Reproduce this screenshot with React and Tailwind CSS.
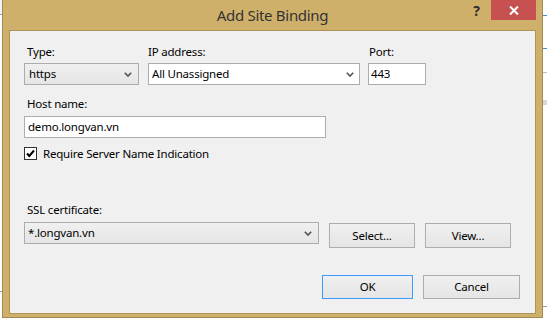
import React from "react";

function Chevron() {
  return (
    <svg width="8" height="5" viewBox="0 0 8 5" className="shrink-0">
      <path d="M0.8 0.8 L4 4 L7.2 0.8" fill="none" stroke="#505050" strokeWidth="1.6" />
    </svg>
  );
}

function Btn({ w, text, focus }) {
  return (
    <div
      className={
        "flex items-center justify-center h-full border bg-linear-to-b from-[#f0f0f0] to-[#e5e5e5] " +
        (focus ? "border-[#3c9bff]" : "border-[#adadad]")
      }
      style={{ width: w }}
    >
      {text}
    </div>
  );
}

export default function App() {
  return (
    <div className="w-[547px] h-[318px] bg-white flex overflow-hidden font-['Noto_Sans',sans-serif] text-[11.5px] tracking-[-0.2px] text-black">
      {/* left background strip */}
      <div className="w-[2px] flex flex-col">
        <div className="h-[14px] bg-[#f2f2f2]" />
        <div className="h-px bg-[#9a9a9a]" />
        <div className="h-[276px] bg-white" />
        <div className="h-px bg-[#9a9a9a]" />
      </div>

      {/* window */}
      <div className="w-[541px] h-[318px] border border-t-0 border-[#a38a52] bg-[#cfb06b] flex flex-col px-[6px] pb-[3px]">
        {/* title bar */}
        <div className="h-[30px] relative flex items-center justify-center">
          <span className="text-[15px] text-[#333] leading-none tracking-[-0.3px]">Add Site Binding</span>
          <div className="absolute right-0 top-0 flex items-start">
            <div className="w-[29px] h-[20px] flex items-center justify-center font-bold text-[14px] text-[#2e2e2e]">?</div>
            <div className="w-[45px] h-[20px] bg-[#c75050] flex items-center justify-center">
              <svg width="10" height="9" viewBox="0 0 10 9">
                <path d="M1 0.5 L9 8.5 M9 0.5 L1 8.5" stroke="white" strokeWidth="2" />
              </svg>
            </div>
          </div>
        </div>

        {/* content */}
        <div className="flex-1 bg-[#f0f0f0] border border-[#ae9456] pl-[14px] pt-[13px] flex flex-col">
          {/* row 1 */}
          <div className="flex">
            <div className="w-[115px] flex flex-col">
              <div className="h-[16px] leading-[16px] pl-[3px] mb-[3px]">Type:</div>
              <div className="h-[22px] border border-[#acacac] bg-linear-to-b from-[#f0f0f0] to-[#e5e5e5] flex items-center pl-[4px] pr-[6px]">
                <span className="flex-1">https</span>
                <Chevron />
              </div>
            </div>
            <div className="w-[212px] ml-[9px] flex flex-col">
              <div className="h-[16px] leading-[16px] mb-[3px]">IP address:</div>
              <div className="h-[22px] border border-[#abadb3] bg-white flex items-center pl-[3px] pr-[5px]">
                <span className="flex-1">All Unassigned</span>
                <Chevron />
              </div>
            </div>
            <div className="w-[58px] ml-[8px] flex flex-col">
              <div className="h-[16px] leading-[16px] pl-[1px] mb-[3px]">Port:</div>
              <div className="h-[22px] border border-[#abadb3] bg-white flex items-center pl-[2px]">443</div>
            </div>
          </div>

          {/* host name */}
          <div className="h-[16px] leading-[16px] pl-[3px] mt-[11px] mb-[4px]">Host name:</div>
          <div className="w-[302px] h-[22px] border border-[#abadb3] bg-white flex items-center pl-[3px]">demo.longvan.vn</div>

          {/* checkbox */}
          <div className="mt-[9px] h-[13px] flex items-center">
            <div className="w-[13px] h-[13px] border border-[#333] bg-white flex items-center justify-center">
              <svg width="11" height="11" viewBox="0 0 11 11">
                <path d="M2 5.5 L4.3 8 L9 2.5" fill="none" stroke="#000" strokeWidth="2" />
              </svg>
            </div>
            <span className="ml-[6px] leading-[16px]">Require Server Name Indication</span>
          </div>

          {/* ssl */}
          <div className="h-[16px] leading-[16px] pl-[3px] mt-[42px] mb-[4px]">SSL certificate:</div>
          <div className="flex items-start">
            <div className="w-[295px] h-[22px] border border-[#acacac] bg-linear-to-b from-[#f0f0f0] to-[#e5e5e5] flex items-center pl-[3px] pr-[6px]">
              <span className="flex-1">*.longvan.vn</span>
              <Chevron />
            </div>
            <div className="ml-[10px] mt-[1px] h-[25px]">
              <Btn w={86} text="Select..." />
            </div>
            <div className="ml-[10px] mt-[1px] h-[25px]">
              <Btn w={86} text="View..." />
            </div>
          </div>

          {/* ok cancel */}
          <div className="mt-[27px] h-[24px] flex justify-end pr-[15px] gap-[10px]">
            <Btn w={91} text="OK" focus />
            <Btn w={97} text="Cancel" />
          </div>
        </div>
      </div>

      {/* right background strip */}
      <div className="w-[4px] flex flex-col bg-white">
        <div className="h-[15px]" />
        <div className="h-px bg-[#3d8fe0]" />
        <div className="h-[32px]" />
        <div className="h-px bg-[#3d8fe0]" />
        <div className="h-[23px]" />
        <div className="h-px bg-[#bcbcbc]" />
        <div className="h-[27px]" />
        <div className="h-[5px] bg-[#d8d8d8]" />
        <div className="h-[201px]" />
        <div className="h-px bg-[#9a9a9a]" />
      </div>
    </div>
  );
}
